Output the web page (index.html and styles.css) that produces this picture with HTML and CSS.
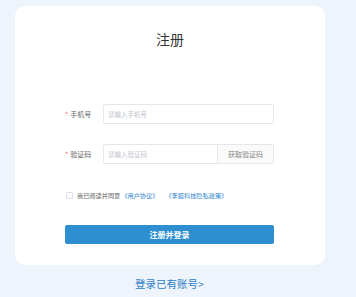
FILE: index.html
```html
<!DOCTYPE html>
<html lang="zh-CN">
<head>
<meta charset="utf-8">
<title>注册</title>
<link rel="stylesheet" href="styles.css">
</head>
<body>
<div class="page">
  <div class="card">
    <h1 class="title">注册</h1>
    <form class="form">
      <div class="row">
        <label class="label"><span class="req">*</span>手机号</label>
        <div class="field"><input class="input" type="text" placeholder="请输入手机号"></div>
      </div>
      <div class="row">
        <label class="label"><span class="req">*</span>验证码</label>
        <div class="field group">
          <input class="input" type="text" placeholder="请输入验证码">
          <button type="button" class="code-btn">获取验证码</button>
        </div>
      </div>
      <div class="agree">
        <span class="check"></span>
        <span class="agree-text">我已阅读并同意</span>
        <a class="link">《用户协议》</a>
        <a class="link gap">《李狐科技隐私政策》</a>
      </div>
      <button type="button" class="submit">注册并登录</button>
    </form>
  </div>
  <a class="login-link">登录已有账号&gt;</a>
</div>
</body>
</html>
```

FILE: styles.css
```css
* { box-sizing: border-box; }
html, body {
  margin: 0;
  padding: 0;
  width: 356px;
  height: 297px;
  overflow: hidden;
}
body {
  background: #eef4fb;
  font-family: "Noto Sans CJK SC", "Noto Sans", sans-serif;
  color: #333;
}
.page {
  padding: 6px 0 0 15px;
  display: flex;
  flex-direction: column;
}
.card {
  width: 310px;
  height: 259px;
  background: #ffffff;
  border-radius: 10px;
  padding-top: 23px;
  display: flex;
  flex-direction: column;
  align-items: center;
}
.title {
  margin: 0;
  font-size: 14px;
  line-height: 20px;
  font-weight: 400;
  color: #333;
}
.form {
  margin-top: 55px;
  width: 209px;
  margin-left: -1px;
  display: flex;
  flex-direction: column;
}
.row {
  display: flex;
  align-items: center;
  height: 20px;
  margin-bottom: 20px;
}
.label {
  width: 38px;
  font-size: 7px;
  color: #666;
  line-height: 20px;
  white-space: nowrap;
}
.req {
  color: #f56c6c;
  margin-right: 2px;
}
.field {
  flex: 1;
  height: 20px;
  display: flex;
}
.input {
  flex: 1;
  min-width: 0;
  height: 20px;
  border: 1px solid #e4e7ed;
  border-radius: 2px;
  padding: 0 4px;
  font-family: inherit;
  font-size: 6.5px;
  color: #333;
  outline: none;
  background: #fff;
}
.input::placeholder { color: #c0c4cc; }
.group .input {
  border-radius: 2px 0 0 2px;
}
.code-btn {
  width: 56px;
  height: 20px;
  border: 1px solid #e4e7ed;
  border-left: none;
  border-radius: 0 2px 2px 0;
  background: #fafafa;
  color: #888;
  font-family: inherit;
  font-size: 7px;
  padding: 0;
}
.agree {
  display: flex;
  align-items: center;
  height: 12px;
  margin-top: 5px;
  margin-left: 1px;
  font-size: 6.2px;
  color: #666;
  white-space: nowrap;
}
.check {
  width: 7px;
  height: 7px;
  border: 1px solid #dcdfe6;
  border-radius: 1px;
  background: #fff;
  margin-right: 4px;
}
.link {
  color: #2f88d0;
  margin-left: 1px;
}
.link.gap { margin-left: 7px; }
.submit {
  margin-top: 24px;
  width: 209px;
  height: 19px;
  border: none;
  border-radius: 2px;
  background: #2d8fd0;
  color: #fff;
  font-family: inherit;
  font-weight: 700;
  font-size: 8px;
  padding: 0;
}
.login-link {
  align-self: flex-start;
  margin: 12px 0 0 120px;
  font-size: 10.5px;
  line-height: 14px;
  color: #2d7fc6;
}
```
